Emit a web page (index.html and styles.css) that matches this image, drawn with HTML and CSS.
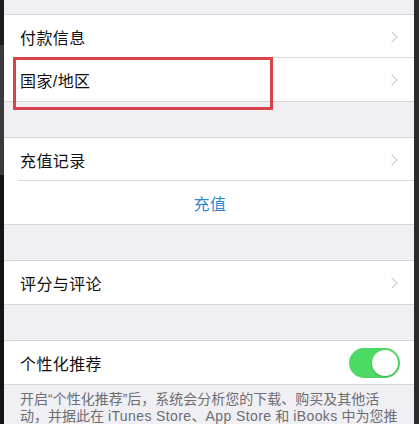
FILE: index.html
```html
<!DOCTYPE html>
<html lang="zh-CN">
  <head>
    <meta charset="UTF-8" />
    <meta name="viewport" content="width=device-width, initial-scale=1.0" />
    <title>账户设置</title>
    <link rel="stylesheet" href="styles.css">
  </head>
  <body>
    <div class="frame">
      <div class="edge left"></div>
      <main class="screen">
        <div class="gap top"></div>
        <section class="group">
          <div class="row inset">
            <span class="label">付款信息</span>
            <span class="chev"></span>
          </div>
          <div class="row mark">
            <span class="label">国家/地区</span>
            <span class="chev"></span>
            <div class="highlight"></div>
          </div>
        </section>
        <div class="gap"></div>
        <section class="group">
          <div class="row inset">
            <span class="label">充值记录</span>
            <span class="chev"></span>
          </div>
          <div class="row center">
            <span class="link">充值</span>
          </div>
        </section>
        <div class="gap"></div>
        <section class="group">
          <div class="row">
            <span class="label">评分与评论</span>
            <span class="chev"></span>
          </div>
        </section>
        <div class="gap"></div>
        <section class="group">
          <div class="row">
            <span class="label">个性化推荐</span>
            <span class="switch"><span class="knob"></span></span>
          </div>
        </section>
        <p class="note">开启“个性化推荐”后，系统会分析您的下载、购买及其他活动，并据此在 <span class="en">iTunes Store</span>、<span class="en">App Store</span> 和 <span class="en">iBooks</span> 中为您推荐内容。</p>
      </main>
      <div class="edge right"></div>
    </div>
  </body>
</html>
```

FILE: styles.css
```css
* {
  margin: 0;
  padding: 0;
  box-sizing: border-box;
}

html,
body {
  height: 100%;
}

body {
  font-family: "Liberation Sans", "Noto Sans CJK SC", sans-serif;
  background-color: #222;
  overflow: hidden;
}

/* LAYOUT */
.frame {
  display: flex;
  height: 424px;
}

.edge.left {
  width: 4px;
  background: linear-gradient(#1c1c1c 0, #1c1c1c 45px, #3a3a3a 45px, #3a3a3a 175px, #141414 175px);
}

.edge.right {
  width: 5px;
  background-color: #2c2c2c;
}

.screen {
  flex: 1;
  background-color: #efeff4;
  overflow: hidden;
}

.gap {
  height: 35px;
}

.gap.top {
  height: 14px;
}

.group {
  background-color: #fff;
  border-top: 1px solid #d6d6da;
  border-bottom: 1px solid #d6d6da;
}

.row {
  position: relative;
  height: 43px;
  display: flex;
  align-items: center;
  justify-content: space-between;
  padding: 0 14px 0 16px;
}

.row.inset::after {
  content: "";
  position: absolute;
  left: 14px;
  right: 0;
  bottom: 0;
  height: 1px;
  background-color: #dcdce0;
}

.row.center {
  justify-content: center;
}

/* ELEMENTS STYLE */
.label {
  font-size: 16px;
  color: #111;
  letter-spacing: 0.4px;
}

.link {
  font-size: 16px;
  color: #2f86d6;
  letter-spacing: 0.4px;
}

.chev {
  width: 8px;
  height: 8px;
  border-top: 1.5px solid #c9c9ce;
  border-right: 1.5px solid #c9c9ce;
  transform: rotate(45deg);
  margin-right: 4px;
}

.highlight {
  position: absolute;
  left: 9px;
  top: -1px;
  width: 260px;
  height: 53px;
  border: 3px solid #d9424b;
  pointer-events: none;
}

.switch {
  position: relative;
  width: 51px;
  height: 30px;
  border-radius: 15px;
  background-color: #4cd964;
}

.knob {
  position: absolute;
  right: 2px;
  top: 2px;
  width: 26px;
  height: 26px;
  border-radius: 50%;
  background-color: #fff;
  box-shadow: 0 1px 2px rgba(0, 0, 0, 0.2);
}

.note {
  width: 400px;
  padding: 6px 0 0 16px;
  font-size: 14px;
  line-height: 17px;
  color: #6d6d72;
}

.note .en {
  letter-spacing: 0.4px;
}
```
